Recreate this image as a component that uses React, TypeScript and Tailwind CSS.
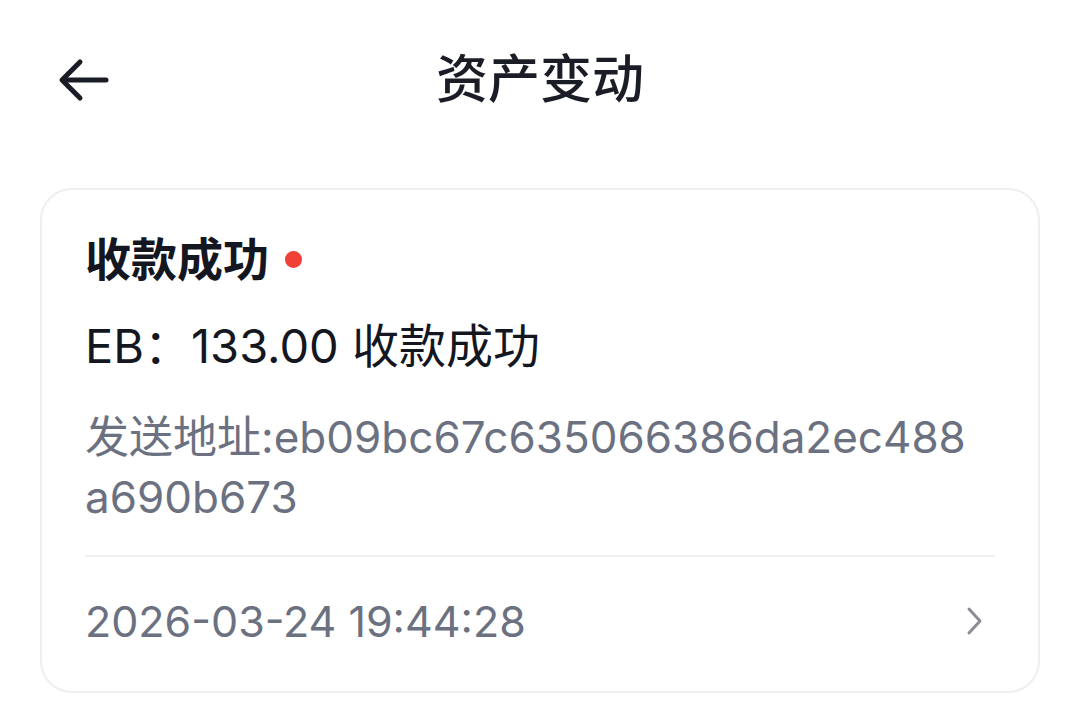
import React from "react";

export default function App() {
  const font = "font-['Inter','Noto_Sans_CJK_SC',sans-serif]";
  return (
    <div className={`w-[1080px] h-[725px] bg-white ${font} overflow-hidden`}>
      <header className="h-[160px] grid grid-cols-[1fr_auto_1fr] items-center">
        <div className="pl-[58px] flex items-center">
          <svg width="52" height="52" viewBox="0 0 52 52" fill="none">
            <path d="M48 26H5" stroke="#1a1d26" strokeWidth="5" strokeLinecap="round" />
            <path d="M22 8L4 26L22 44" stroke="#1a1d26" strokeWidth="5" strokeLinecap="round" strokeLinejoin="round" />
          </svg>
        </div>
        <h1 className="text-[52px] leading-[60px] font-medium text-[#1a1d26]">资产变动</h1>
        <div />
      </header>
      <div className="mt-[28px] mx-[40px] rounded-[32px] border-[2px] border-[#efefef] px-[43px] pt-[39px] pb-[40px]">
        <div className="h-[60px] flex items-center">
          <span className="text-[46px] font-bold text-[#14171f] leading-[60px]">收款成功</span>
          <span className="ml-[16px] w-[17px] h-[17px] rounded-full bg-[#ef4136]" />
        </div>
        <div className="mt-[27px] h-[60px] flex items-center text-[47px] leading-[60px] text-[#14171f]">
          EB：133.00 收款成功
        </div>
        <div className="mt-[31px] text-[44px] leading-[60px] text-[#6b7180]">
          发送地址:eb09bc67c635066386da2ec488
          <br />
          a690b673
        </div>
        <div className="mt-[28px] h-[2px] bg-[#f0f0f0]" />
        <div className="mt-[34px] h-[60px] flex items-center justify-between">
          <span className="text-[43px] leading-[60px] text-[#6b7180]">2026-03-24 19:44:28</span>
          <svg width="20" height="30" viewBox="0 0 20 30" fill="none" className="mr-[10px]">
            <path d="M4 3L15 15L4 27" stroke="#8a8d94" strokeWidth="3" strokeLinecap="round" strokeLinejoin="round" />
          </svg>
        </div>
      </div>
    </div>
  );
}
